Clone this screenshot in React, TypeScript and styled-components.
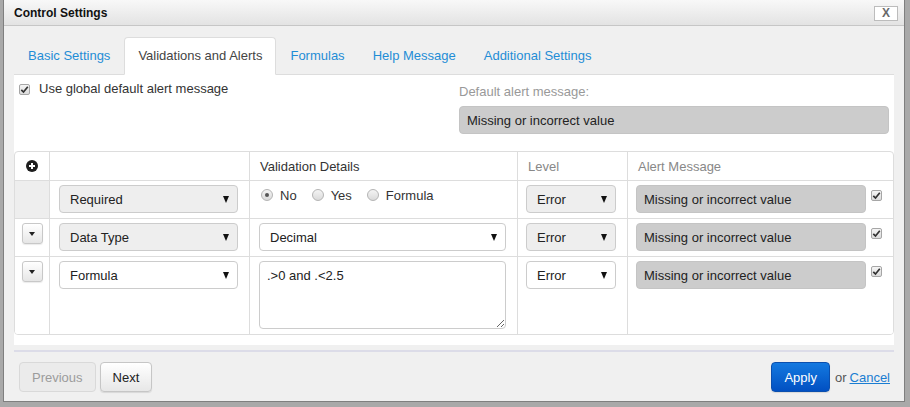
import React from "react";
import styled, { createGlobalStyle } from "styled-components";

const GlobalStyle = createGlobalStyle`
  html, body { margin: 0; padding: 0; background: #a9a9a9; }
  body {
    font-family: "Liberation Sans", Arial, sans-serif;
    font-size: 13px;
    color: #333;
  }
  * { box-sizing: border-box; }
`;

const Dialog = styled.div`
  margin-left: 3px;
  width: 902px;
  height: 402px;
  border: 1px solid #7f7f7f;
  border-top: none;
  background: #f0f0f0;
  display: flex;
  flex-direction: column;
`;

const TitleBar = styled.div`
  height: 26px;
  flex: none;
  display: flex;
  align-items: center;
  justify-content: space-between;
  padding: 0 6px 0 10px;
  background: linear-gradient(#f8f8f8, #e3e3e3);
  border-bottom: 1px solid #c6c6c6;
`;

const Title = styled.div`
  font-size: 12px;
  font-weight: bold;
  color: #111;
`;

const CloseButton = styled.div`
  width: 24px;
  height: 15px;
  margin-top: 2px;
  border: 1px solid #bcbcbc;
  background: #fff;
  color: #6a6a6a;
  font-size: 12px;
  font-weight: bold;
  line-height: 13px;
  text-align: center;
`;

const Body = styled.div`
  padding: 11px 10px 0;
  display: flex;
  flex-direction: column;
`;

const TabList = styled.div`
  display: flex;
  border-bottom: 1px solid #dddddd;
`;

const Tab = styled.div<{ $active?: boolean }>`
  padding: 9px 13px;
  line-height: 18px;
  font-size: 13px;
  margin-bottom: -1px;
  border: 1px solid ${(p) => (p.$active ? "#dddddd" : "transparent")};
  border-bottom-color: ${(p) => (p.$active ? "#ffffff" : "transparent")};
  border-radius: 4px 4px 0 0;
  background: ${(p) => (p.$active ? "#ffffff" : "transparent")};
  color: ${(p) => (p.$active ? "#444" : "#1f8dd6")};
`;

const Panel = styled.div`
  background: #fff;
  padding: 6px 0 10px;
`;

const TopSection = styled.div`
  display: flex;
  align-items: flex-start;
  justify-content: space-between;
  padding: 0 5px;
`;

const CheckLabel = styled.div`
  display: flex;
  align-items: center;
  gap: 9px;
  line-height: 16px;
  color: #333;
`;

const RightCol = styled.div`
  width: 430px;
  margin-top: 3px;
  display: flex;
  flex-direction: column;
  gap: 6px;
`;

const FieldLabel = styled.div`
  line-height: 16px;
  color: #999;
`;

const GrayField = styled.div<{ $width?: number }>`
  height: 28px;
  ${(p) => (p.$width ? `width: ${p.$width}px;` : "")}
  display: flex;
  align-items: center;
  padding: 0 7px;
  background: #cccccc;
  border: 1px solid #c4c4c4;
  border-radius: 4px;
  color: #222;
  white-space: nowrap;
`;

const Table = styled.div`
  margin-top: 17px;
  border: 1px solid #dddddd;
  border-radius: 4px;
  display: grid;
  grid-template-columns: 35px 200px 268px 110px 1fr;
  overflow: hidden;
`;

const HeadCell = styled.div<{ $last?: boolean; $dim?: boolean; $center?: boolean }>`
  height: 29px;
  display: flex;
  align-items: center;
  justify-content: ${(p) => (p.$center ? "center" : "flex-start")};
  padding: 0 ${(p) => (p.$center ? "0" : "10px")};
  border-bottom: 1px solid #dddddd;
  border-right: ${(p) => (p.$last ? "none" : "1px solid #dddddd")};
  color: ${(p) => (p.$dim ? "#888" : "#333")};
`;

const Cell = styled.div<{ $last?: boolean; $lastRow?: boolean; $gray?: boolean; $pl?: number }>`
  padding: 4px 11px 5px ${(p) => p.$pl ?? 9}px;
  border-bottom: ${(p) => (p.$lastRow ? "none" : "1px solid #dddddd")};
  border-right: ${(p) => (p.$last ? "none" : "1px solid #dddddd")};
  background: ${(p) => (p.$gray ? "#eeeeee" : "#ffffff")};
  display: flex;
  align-items: flex-start;
  gap: 5px;
`;

const HandleCell = styled(Cell)`
  padding: 4px 0 0;
  justify-content: center;
`;

const CaretButton = styled.div`
  width: 21px;
  height: 21px;
  border: 1px solid #c8c8c8;
  border-radius: 3px;
  background: linear-gradient(#ffffff, #e6e6e6);
  box-shadow: 0 1px 1px rgba(0, 0, 0, 0.08);
  display: flex;
  align-items: center;
  justify-content: center;
  &::after {
    content: "";
    border-left: 3px solid transparent;
    border-right: 3px solid transparent;
    border-top: 4px solid #222;
  }
`;

const Select = styled.div<{ $gray?: boolean }>`
  width: 100%;
  height: 28px;
  display: flex;
  align-items: center;
  justify-content: space-between;
  padding: 0 8px 0 10px;
  border: 1px solid #cccccc;
  border-radius: 4px;
  background: ${(p) => (p.$gray ? "#eeeeee" : "#ffffff")};
  color: #222;
  &::after {
    content: "";
    border-left: 3.5px solid transparent;
    border-right: 3.5px solid transparent;
    border-top: 7px solid #111;
  }
`;

const RadioGroup = styled.div`
  display: flex;
  align-items: center;
  height: 20px;
  padding-left: 1px;
  gap: 15px;
`;

const RadioOption = styled.div`
  display: flex;
  align-items: center;
  gap: 7px;
  color: #333;
`;

const Radio = styled.span<{ $checked?: boolean }>`
  width: 12px;
  height: 12px;
  border-radius: 50%;
  border: 1px solid #b4b4b4;
  background: linear-gradient(#f4f4f4, #dadada);
  display: flex;
  align-items: center;
  justify-content: center;
  &::after {
    content: "";
    width: 4px;
    height: 4px;
    border-radius: 50%;
    background: ${(p) => (p.$checked ? "#555" : "transparent")};
  }
`;

const TextArea = styled.textarea`
  width: 100%;
  height: 68px;
  border: 1px solid #cccccc;
  border-radius: 4px;
  padding: 6px 7px;
  font-family: "Liberation Sans", Arial, sans-serif;
  font-size: 13px;
  color: #222;
  resize: vertical;
  outline: none;
`;

const CheckBoxBox = styled.span<{ $mt?: number }>`
  width: 11px;
  height: 11px;
  flex: none;
  margin-top: ${(p) => p.$mt ?? 0}px;
  border: 1px solid #a6a6a6;
  border-radius: 2px;
  background: linear-gradient(#f5f5f5, #dcdcdc);
  display: flex;
  align-items: center;
  justify-content: center;
`;

const Separator = styled.div`
  margin-top: 5px;
  height: 2px;
  background: #dcdce8;
`;

const Footer = styled.div`
  display: flex;
  align-items: center;
  justify-content: space-between;
  padding: 10px 14px 9px 15px;
`;

const ButtonGroup = styled.div`
  display: flex;
  align-items: center;
  gap: 4px;
`;

const Button = styled.div<{ $variant?: "disabled" | "default" | "primary" }>`
  height: 30px;
  padding: 0 12px;
  display: flex;
  align-items: center;
  border-radius: 4px;
  font-size: 13px;
  border: 1px solid
    ${(p) =>
      p.$variant === "primary" ? "#0b4fae" : p.$variant === "disabled" ? "#d9d9d9" : "#c6c6c6"};
  background: ${(p) =>
    p.$variant === "primary"
      ? "linear-gradient(#1479e0, #0150c2)"
      : p.$variant === "disabled"
      ? "#ebebeb"
      : "linear-gradient(#ffffff, #e7e7e7)"};
  color: ${(p) =>
    p.$variant === "primary" ? "#fff" : p.$variant === "disabled" ? "#9c9c9c" : "#222"};
  box-shadow: ${(p) => (p.$variant === "disabled" ? "none" : "0 1px 1px rgba(0,0,0,0.1)")};
`;

const OrText = styled.span`
  color: #555;
  margin-left: 1px;
`;

const CancelLink = styled.a`
  color: #1a7dd2;
  text-decoration: underline;
  margin-left: -1px;
`;

const Check = ({ mt }: { mt?: number }) => (
  <CheckBoxBox $mt={mt}>
    <svg width="9" height="9" viewBox="0 0 9 9">
      <path d="M1.3 4.8 L3.5 7 L7.8 1.8" fill="none" stroke="#333" strokeWidth="1.7" />
    </svg>
  </CheckBoxBox>
);

const PlusIcon = () => (
  <svg width="12" height="12" viewBox="0 0 12 12">
    <circle cx="6" cy="6" r="6" fill="#1e1e1e" />
    <path d="M6 3 V9 M3 6 H9" stroke="#fff" strokeWidth="2" />
  </svg>
);

const tabs = ["Basic Settings", "Validations and Alerts", "Formulas", "Help Message", "Additional Settings"];
const MSG = "Missing or incorrect value";

export default function App() {
  return (
    <>
      <GlobalStyle />
      <Dialog>
        <TitleBar>
          <Title>Control Settings</Title>
          <CloseButton>X</CloseButton>
        </TitleBar>
        <Body>
          <TabList>
            {tabs.map((t) => (
              <Tab key={t} $active={t === "Validations and Alerts"}>
                {t}
              </Tab>
            ))}
          </TabList>
          <Panel>
            <TopSection>
              <CheckLabel>
                <Check />
                Use global default alert message
              </CheckLabel>
              <RightCol>
                <FieldLabel>Default alert message:</FieldLabel>
                <GrayField>{MSG}</GrayField>
              </RightCol>
            </TopSection>
            <Table>
              <HeadCell $center>
                <PlusIcon />
              </HeadCell>
              <HeadCell />
              <HeadCell>Validation Details</HeadCell>
              <HeadCell $dim>Level</HeadCell>
              <HeadCell $dim $last>
                Alert Message
              </HeadCell>

              <HandleCell $gray />
              <Cell>
                <Select $gray>Required</Select>
              </Cell>
              <Cell $pl={10}>
                <RadioGroup>
                  <RadioOption>
                    <Radio $checked />
                    No
                  </RadioOption>
                  <RadioOption>
                    <Radio />
                    Yes
                  </RadioOption>
                  <RadioOption>
                    <Radio />
                    Formula
                  </RadioOption>
                </RadioGroup>
              </Cell>
              <Cell $pl={8}>
                <Select $gray>Error</Select>
              </Cell>
              <Cell $pl={8} $last>
                <GrayField $width={230}>{MSG}</GrayField>
                <Check mt={5} />
              </Cell>

              <HandleCell>
                <CaretButton />
              </HandleCell>
              <Cell>
                <Select $gray>Data Type</Select>
              </Cell>
              <Cell>
                <Select>Decimal</Select>
              </Cell>
              <Cell $pl={8}>
                <Select $gray>Error</Select>
              </Cell>
              <Cell $pl={8} $last>
                <GrayField $width={230}>{MSG}</GrayField>
                <Check mt={5} />
              </Cell>

              <HandleCell $lastRow>
                <CaretButton />
              </HandleCell>
              <Cell $lastRow>
                <Select>Formula</Select>
              </Cell>
              <Cell $lastRow>
                <TextArea defaultValue=".>0 and .<2.5" />
              </Cell>
              <Cell $pl={8} $lastRow>
                <Select>Error</Select>
              </Cell>
              <Cell $pl={8} $last $lastRow>
                <GrayField $width={230}>{MSG}</GrayField>
                <Check mt={5} />
              </Cell>
            </Table>
          </Panel>
          <Separator />
        </Body>
        <Footer>
          <ButtonGroup>
            <Button $variant="disabled">Previous</Button>
            <Button>Next</Button>
          </ButtonGroup>
          <ButtonGroup>
            <Button $variant="primary">Apply</Button>
            <OrText>or</OrText>
            <CancelLink href="#">Cancel</CancelLink>
          </ButtonGroup>
        </Footer>
      </Dialog>
    </>
  );
}
